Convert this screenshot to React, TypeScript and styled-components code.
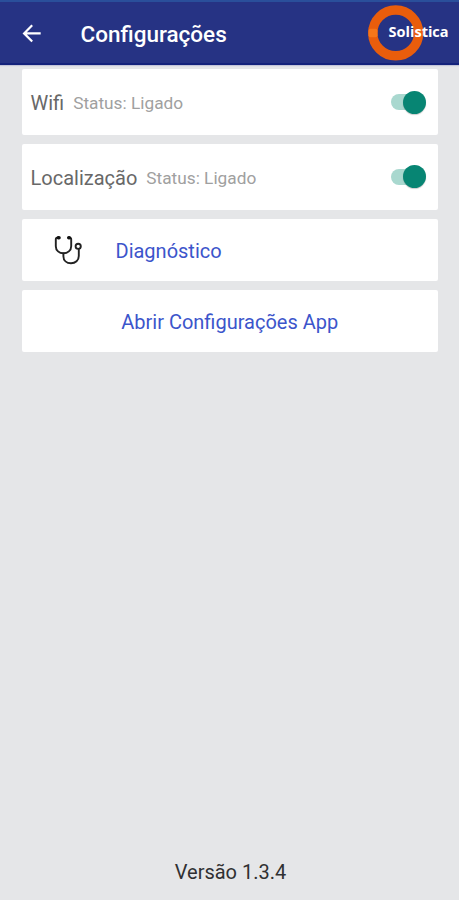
import React from "react";
import styled, { createGlobalStyle } from "styled-components";

const GlobalStyle = createGlobalStyle`
  * { box-sizing: border-box; }
  body { margin: 0; background: #e5e6e8; font-family: Roboto, "Liberation Sans", sans-serif; }
`;

const Screen = styled.div`
  height: 900px;
  display: flex;
  flex-direction: column;
  background: #e5e6e8;
  overflow: hidden;
`;

const AppBar = styled.header`
  height: 65px;
  flex: none;
  display: flex;
  align-items: center;
  padding: 3px 0 0 19.5px;
  background: #263384;
  border-top: 2px solid #2a4f9b;
  border-bottom: 2px solid #14227b;
  box-shadow: 0 1px 1px #c3c5d8;
`;

const BackButton = styled.button`
  width: 24px;
  height: 24px;
  padding: 0;
  border: 0;
  background: none;
  color: #fff;
  svg { display: block; }
`;

const Title = styled.h1`
  margin: 0 0 0 37px;
  color: #fff;
  font-size: 22.5px;
  font-weight: 500;
  line-height: 28px;
`;

const Logo = styled.svg`
  display: block;
  flex: none;
  margin: -3px 0 0 auto;
`;

const List = styled.main`
  flex: 1;
  display: flex;
  flex-direction: column;
  gap: 9px;
  padding: 4px 21px 0 21.5px;
`;

const Card = styled.section<{ $height: number; $center?: boolean }>`
  height: ${(p) => p.$height}px;
  flex: none;
  display: flex;
  align-items: center;
  justify-content: ${(p) => (p.$center ? "center" : "flex-start")};
  padding: 0 9px;
  background: #fff;
  border-radius: 2px;
`;

const Label = styled.span`
  margin-top: 2px;
  color: #686868;
  font-size: 20px;
  line-height: 24px;
`;

const Status = styled.span`
  margin: 2px 0 0 9px;
  color: #a0a0a0;
  font-size: 17.25px;
  line-height: 22px;
`;

const Toggle = styled.button`
  width: 36px;
  height: 24px;
  margin: 0 2.5px 0 auto;
  padding: 0;
  display: flex;
  align-items: center;
  border: 0;
  background: none;
`;

const Track = styled.span`
  width: 30px;
  height: 16px;
  border-radius: 8px;
  background: #a9d8cf;
`;

const Thumb = styled.span`
  width: 23px;
  height: 23px;
  flex: none;
  margin-left: -18px;
  border-radius: 50%;
  background: #078573;
  box-shadow: 0 1px 1px rgba(0, 0, 0, 0.2);
`;

const Action = styled.span<{ $left?: number }>`
  margin-top: 2px;
  margin-left: ${(p) => p.$left ?? 0}px;
  color: #3c55cb;
  font-size: 20px;
  line-height: 24px;
`;

const Stethoscope = styled.svg`
  display: block;
  margin-left: 21px;
`;

const Version = styled.footer`
  height: 56px;
  flex: none;
  padding-left: 2px;
  text-align: center;
  color: #303032;
  font-size: 20px;
  line-height: 56px;
`;

function Switch({ label }: { label: string }) {
  return (
    <Toggle role="switch" aria-checked="true" aria-label={label}>
      <Track />
      <Thumb />
    </Toggle>
  );
}

export default function App() {
  return (
    <Screen>
      <GlobalStyle />
      <AppBar>
        <BackButton aria-label="Voltar">
          <svg width="24" height="24" viewBox="0 0 24 24" fill="none" stroke="currentColor" strokeWidth="2.2">
            <path d="M20.7 11.4H4.8M12.2 3.3L4.1 11.4l8.1 8.1" />
          </svg>
        </BackButton>
        <Title>Configurações</Title>
        <Logo width="92" height="58" viewBox="367 4 92 58">
          <circle cx="395.7" cy="32.9" r="22.9" fill="none" stroke="#e95d0c" strokeWidth="9.4" />
          <rect x="368.5" y="28.8" width="9" height="8.5" rx="2" fill="#f5761a" />
          <text x="388.6" y="37.2" fill="#fff" fontFamily="'Open Sans', sans-serif" fontSize="14.2" fontWeight="700" textLength="60" lengthAdjust="spacingAndGlyphs">
            Solistica
          </text>
        </Logo>
      </AppBar>
      <List>
        <Card $height={66}>
          <Label>Wifi</Label>
          <Status>Status: Ligado</Status>
          <Switch label="Wifi" />
        </Card>
        <Card $height={65.5}>
          <Label>Localização</Label>
          <Status>Status: Ligado</Status>
          <Switch label="Localização" />
        </Card>
        <Card $height={62.5}>
          <Stethoscope width="32" height="32" viewBox="52 234 32 32" fill="none" stroke="#222" strokeWidth="1.9" strokeLinecap="round">
            <path d="M58.8 237.6H57.2Q55.8 237.6 55.8 239.4V246.2C55.8 250.5 59.2 253.3 63.4 253.3S71.2 250.5 71.2 246.2V239.4Q71.2 237.6 69.8 237.6H68.5" />
            <path d="M63.4 253.5V256.2C63.4 260.5 66.6 263.3 71 263.3S78.8 260.3 78.8 256V249" />
            <circle cx="78.2" cy="246.3" r="2.6" />
            <path d="M58.3 237.7H59M68.8 237.7H69.3" stroke="#111" strokeWidth="3.6" />
          </Stethoscope>
          <Action $left={32}>Diagnóstico</Action>
        </Card>
        <Card $height={62} $center>
          <Action>Abrir Configurações App</Action>
        </Card>
      </List>
      <Version>Versão 1.3.4</Version>
    </Screen>
  );
}
